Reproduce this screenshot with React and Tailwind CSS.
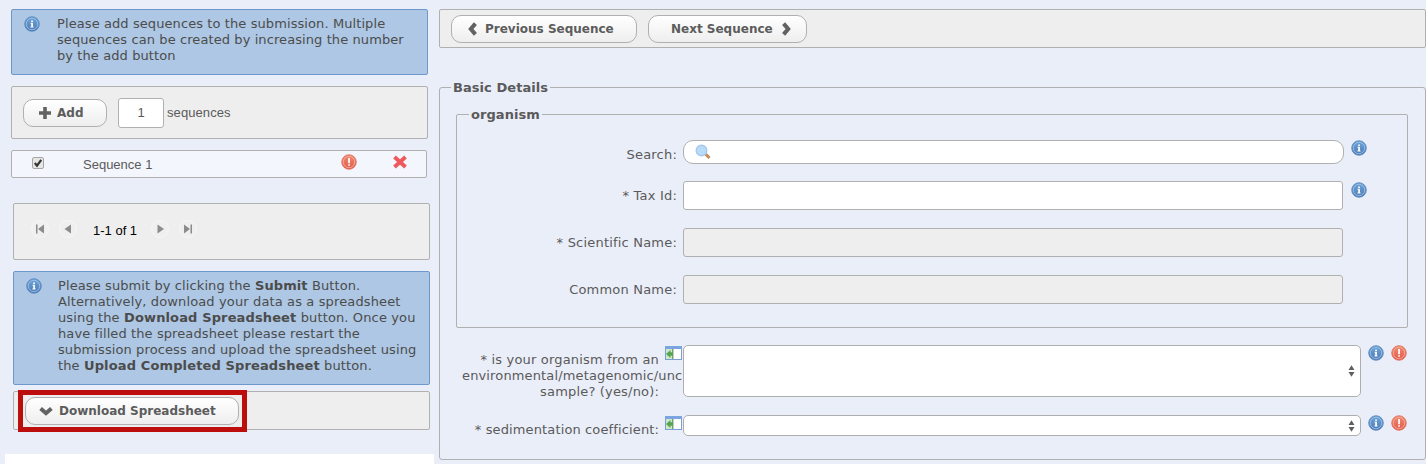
import React from "react";

function Info({ className = "" }) {
  return (
    <svg viewBox="0 0 16 16" className={"size-4 shrink-0 " + className}>
      <defs>
        <linearGradient id="infoFill" x1="0" y1="0" x2="0" y2="1">
          <stop offset="0" stopColor="#6fa6da" />
          <stop offset="1" stopColor="#4c79b4" />
        </linearGradient>
      </defs>
      <circle cx="8" cy="8" r="7.3" fill="url(#infoFill)" stroke="#5585be" strokeWidth="0.8" />
      <circle cx="8" cy="8" r="5.7" fill="none" stroke="#a3c4e6" strokeWidth="0.8" />
      <path d="M7.2 4.4h1.7v1.5H7.2zM6.6 6.8h2.3v3.7h.7v.9H6.4v-.9h.8V7.7h-.6z" fill="#fff" />
    </svg>
  );
}

function Alert({ className = "" }) {
  return (
    <svg viewBox="0 0 16 16" className={"size-4 shrink-0 " + className}>
      <defs>
        <linearGradient id="alertFill" x1="0" y1="0" x2="0" y2="1">
          <stop offset="0" stopColor="#f08a70" />
          <stop offset="1" stopColor="#e05a4a" />
        </linearGradient>
      </defs>
      <circle cx="8" cy="8" r="7.3" fill="url(#alertFill)" stroke="#e0705c" strokeWidth="0.8" />
      <circle cx="8" cy="8" r="5.7" fill="none" stroke="#f7b3a3" strokeWidth="0.8" />
      <path d="M7.2 4h1.7v5.2H7.2zM7.2 10.2h1.7v1.5H7.2z" fill="#fff" />
    </svg>
  );
}

function Pill({ className = "", children }) {
  return (
    <button
      className={
        "flex h-7 shrink-0 items-center whitespace-nowrap rounded-[10px] border border-[#b0b0b0] bg-linear-to-b from-white to-[#eeeeee] text-[12px] font-bold leading-4 text-[#5c5c5c] " +
        className
      }
    >
      {children}
    </button>
  );
}

function Chevron({ className = "" }) {
  return (
    <svg viewBox="0 0 14 14" className={"size-3.5 shrink-0 " + className}>
      <path d="M1.6 4.6 7 9.2l5.4-4.600" fill="none" stroke="#626262" strokeWidth="4" />
    </svg>
  );
}

function PagerIcon({ d, className = "" }) {
  return (
    <svg viewBox="0 0 18 18" className={"size-[18px] shrink-0 " + className}>
      <circle cx="9" cy="9" r="8.4" fill="#efefef" stroke="#f6f6f6" />
      <path d={d} fill="#8c8c8c" />
    </svg>
  );
}

function Insert() {
  return (
    <svg viewBox="0 0 17 14" className="h-3.5 w-[17px] shrink-0">
      <rect x="0.5" y="0.5" width="16" height="13" fill="#fff" stroke="#7b9fd4" />
      <rect x="0" y="0" width="17" height="3" fill="#7ba5e0" />
      <rect x="1" y="3" width="7" height="10" fill="#cfe8c8" />
      <path d="M1 8 5.5 4v2.3h2v3.4h-2V12z" fill="#57a552" />
      <rect x="7.2" y="3" width="1.2" height="10" fill="#5c8f62" />
    </svg>
  );
}

function Select({ className = "" }) {
  return (
    <div className={"ml-px flex w-[678px] items-center justify-end rounded-[5px] border border-[#aeaeae] bg-white pr-[5px] " + className}>
      <svg viewBox="0 0 7 12" className="h-3 w-[7px]">
        <path d="M3.5 0.200 6.5 5H.5zM3.5 11.800 6.5 7H.5z" fill="#5e5e5e" />
      </svg>
    </div>
  );
}

function Row({ label, children, className = "" }) {
  return (
    <div className={"flex " + className}>
      <div className="w-[220px] shrink-0 pt-[7px] text-right tracking-[0.2px]">{label}</div>
      <div className="ml-1.5 flex shrink-0">{children}</div>
    </div>
  );
}

export default function App() {
  return (
    <div className="flex h-[464px] w-[1426px] overflow-hidden bg-[#eaeef9] font-['DejaVu_Sans',Verdana,sans-serif] text-[13px] leading-4 text-[#5a5a5a]">
      <aside className="flex w-[439px] shrink-0 flex-col pl-[11px] pt-[9px]">
        <div className="flex h-[66px] w-[417px] shrink-0 rounded-[2px] border border-[#6d98cb] bg-[#adc7e4] pt-[6px] text-[#4c4c4c]">
          <Info className="ml-3" />
          <div className="ml-[17px] whitespace-nowrap tracking-[0.09px]">
            <p>Please add sequences to the submission. Multiple</p>
            <p>sequences can be created by increasing the number</p>
            <p>by the add button</p>
          </div>
        </div>

        <div className="mt-[11px] flex h-[53px] w-[417px] shrink-0 items-center rounded-[2px] border border-[#b0b0b0] bg-[#eeeeee] pl-[11px]">
          <Pill className="w-[84px] pl-3.5">
            <svg viewBox="0 0 14 14" className="mr-[5px] size-3.5">
              <path d="M5.2 1h3.6v4.2H13v3.6H8.8V13H5.2V8.8H1V5.2h4.2z" fill="#626262" />
            </svg>
            Add
          </Pill>
          <div className="ml-[11px] flex h-[30px] w-[46px] items-center justify-center rounded-[3px] border border-[#b0b0b0] bg-white pt-px font-['Liberation_Sans',Arial,sans-serif] text-[13px]">1</div>
          <span className="ml-[3px] font-['Liberation_Sans',Arial,sans-serif] text-[13px] tracking-[0.08px]">sequences</span>
        </div>

        <div className="mt-[11px] flex h-7 w-[416px] shrink-0 rounded-[2px] border border-[#b0b0b0] bg-[#f3f6fc] font-['Liberation_Sans',Arial,sans-serif]">
          <svg viewBox="0 0 12 12" className="ml-5 mt-1.5 size-3">
            <rect x="0.5" y="0.5" width="11" height="11" rx="1.5" fill="#e6e6e6" stroke="#a6a6a6" />
            <path d="M2.8 6 5 8.6 9.2 2.8" fill="none" stroke="#333" strokeWidth="2.2" />
          </svg>
          <span className="ml-[39px] mt-[6px] w-[258px] text-[13px]">Sequence 1</span>
          <Alert className="mt-[3px]" />
          <svg viewBox="0 0 16 16" className="ml-[35px] mt-[3px] size-4">
            <path d="M2.5 3 13.5 13M13.5 3 2.5 13" stroke="#f0575a" strokeWidth="3.8" />
          </svg>
        </div>

        <div className="ml-0.5 mt-[25px] flex h-[57px] w-[417px] shrink-0 rounded-[2px] border border-[#b0b0b0] bg-[#eeeeee] pl-[17px] pt-4 font-['Liberation_Sans',Arial,sans-serif] text-black">
          <PagerIcon d="M5 4.5h1.5v9H5zM13 4.5v9L7 9z" />
          <PagerIcon className="ml-2.5" d="M12 4.5v9L5.5 9z" />
          <span className="ml-4 mt-[3px] w-[44px] whitespace-nowrap text-[13px]">1-1 of 1</span>
          <PagerIcon className="ml-[14px]" d="M6.5 4.5v9L13 9z" />
          <PagerIcon className="ml-2.5" d="M5 4.5v9L11 9zM11.5 4.5H13v9h-1.5z" />
        </div>

        <div className="ml-0.5 mt-[11px] flex h-[114px] w-[417px] shrink-0 rounded-[2px] border border-[#6d98cb] bg-[#adc7e4] pt-[6px] text-[#4c4c4c]">
          <Info className="ml-3" />
          <div className="ml-4 whitespace-nowrap tracking-[0.1px]">
            <p>Please submit by clicking the <b>Submit</b> Button.</p>
            <p className="tracking-[0.13px]">Alternatively, download your data as a spreadsheet</p>
            <p className="tracking-[0.13px]">using the <b>Download Spreadsheet</b> button. Once you</p>
            <p>have filled the spreadsheet please restart the</p>
            <p>submission process and upload the spreadsheet using</p>
            <p className="tracking-[0.13px]">the <b>Upload Completed Spreadsheet</b> button.</p>
          </div>
        </div>

        <div className="relative ml-0.5 mt-1.5 flex h-[39px] w-[417px] shrink-0 items-center rounded-[2px] border border-[#b0b0b0] bg-[#eeeeee] pl-[11px]">
          <Pill className="w-[214px] pl-[13px]">
            <Chevron className="mr-1.5" />
            Download Spreadsheet
          </Pill>
          <div className="absolute left-1 top-[-2px] h-[42px] w-[229px] border-5 border-[#bd0e0e]" />
        </div>
        <div className="-ml-1.5 mt-6 h-2.5 w-[429px] shrink-0 bg-white" />
      </aside>

      <main className="w-[987px] shrink-0 pt-[9px]">
        <div className="flex h-[39px] items-center rounded-[2px] border border-[#b0b0b0] bg-[#eeeeee] pl-[11px]">
          <Pill className="w-[186px] pl-3.5">
            <Chevron className="mr-[5px] rotate-90" />
            Previous Sequence
          </Pill>
          <Pill className="ml-[11px] w-[159px] pl-[22px]">
            Next Sequence
            <Chevron className="ml-[6px] -rotate-90" />
          </Pill>
        </div>

        <fieldset className="mt-[30px] h-[382px] rounded-[3px] border border-[#b0b0b0] pl-4">
          <legend className="-ml-[5px] px-0.5 pt-0.5 font-bold tracking-[0.06px]">Basic Details</legend>
          <fieldset className="mt-[9px] h-[223px] w-[952px] rounded-[2px] border border-[#b0b0b0]">
            <legend className="ml-3 px-0.5 pt-0.5 font-bold tracking-[0.06px]">organism</legend>
            <Row className="mt-[17px]" label="Search:">
              <div className="flex h-6 w-[661px] rounded-[10px] border border-[#b0b0b0] bg-white">
                <svg viewBox="0 0 16 16" className="ml-[11px] mt-[3px] size-4">
                  <path d="M10.5 10 14.5 14" stroke="#c58b55" strokeWidth="3" />
                  <circle cx="6.5" cy="6.5" r="5.3" fill="#b8dcf8" stroke="#a5c8ec" strokeWidth="1.4" />
                </svg>
              </div>
              <Info className="ml-[7px]" />
            </Row>
            <Row className="mt-[17px]" label="* Tax Id:">
              <div className="h-[29px] w-[660px] rounded-[3px] border border-[#b0b0b0] bg-white" />
              <Info className="ml-2 mt-px" />
            </Row>
            <Row className="mt-[18px]" label="* Scientific Name:">
              <div className="h-[29px] w-[660px] rounded-[3px] border border-[#b0b0b0] bg-[#eeeeee]" />
            </Row>
            <Row className="mt-[18px]" label="Common Name:">
              <div className="h-[29px] w-[660px] rounded-[3px] border border-[#b0b0b0] bg-[#eeeeee]" />
            </Row>
          </fieldset>

          <div className="mt-[17px] flex h-[52px]">
            <div className="w-[203px] shrink-0 pt-[7px] text-right tracking-[0.18px]">
              <p>* is your organism from an</p>
              <p className="ml-1.5 whitespace-nowrap text-left tracking-[0.14px]">environmental/metagenomic/unc</p>
              <p>sample? (yes/no):</p>
            </div>
            <div className="ml-1.5 pt-px"><Insert /></div>
            <Select className="h-[52px]" />
            <Info className="ml-[7px]" />
            <Alert className="ml-[7px]" />
          </div>
          <div className="mt-[18px] flex">
            <div className="w-[203px] shrink-0 pt-[7px] text-right tracking-[0.13px]">* sedimentation coefficient:</div>
            <div className="ml-1.5 pt-px"><Insert /></div>
            <Select className="h-[21px]" />
            <Info className="ml-[7px]" />
            <Alert className="ml-[7px]" />
          </div>
        </fieldset>
      </main>
    </div>
  );
}
